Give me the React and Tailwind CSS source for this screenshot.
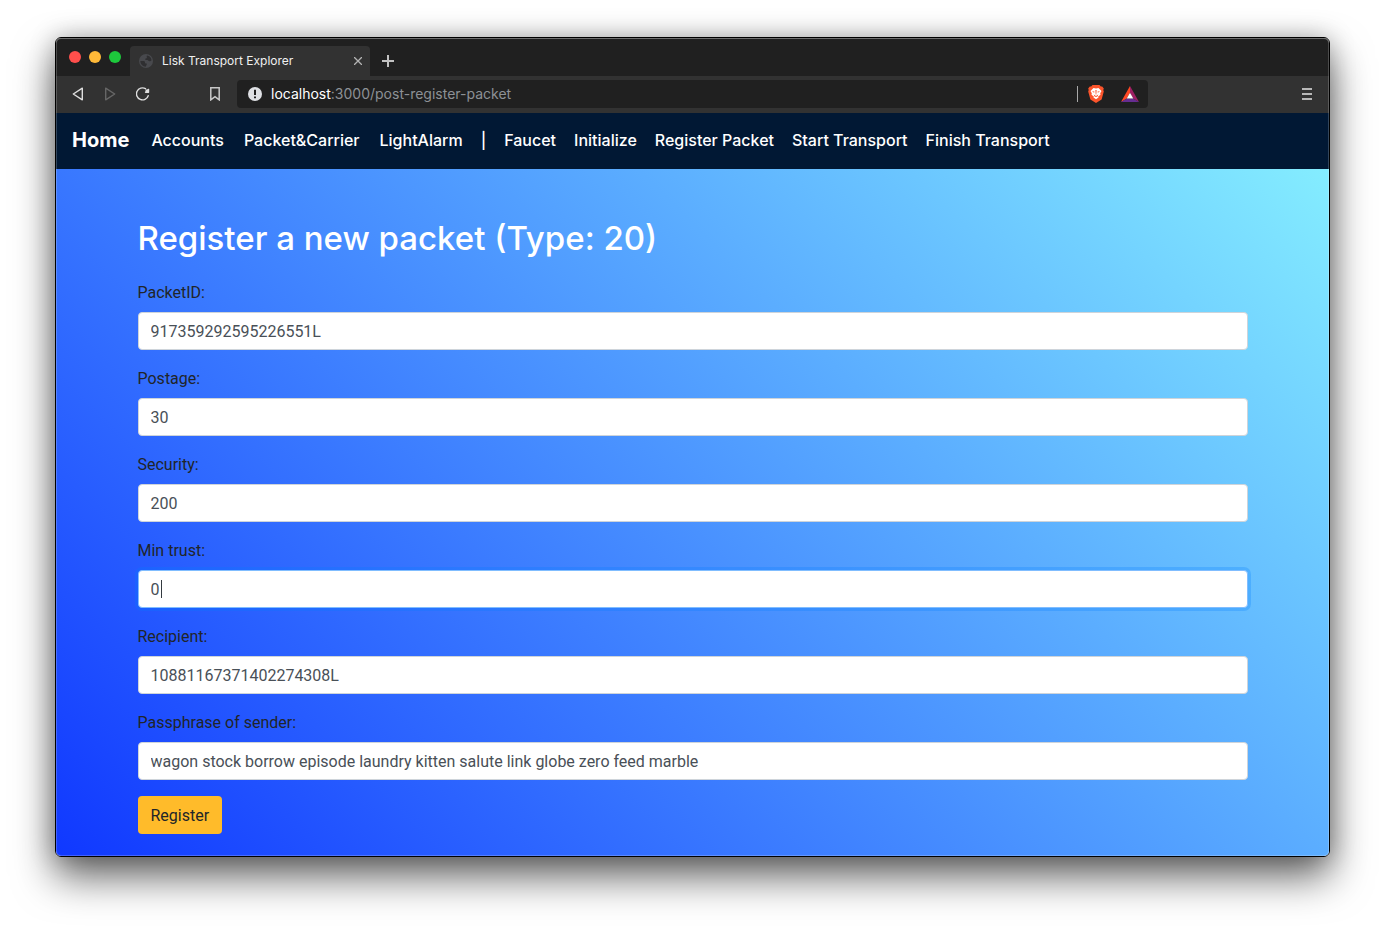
const accountLinks = ['Accounts', 'Packet&Carrier', 'LightAlarm'];
const transactionLinks = ['Faucet', 'Initialize', 'Register Packet', 'Start Transport', 'Finish Transport'];

const fields = [
  { id: 'packet-id', label: 'PacketID:', value: '917359292595226551L' },
  { id: 'postage', label: 'Postage:', value: '30' },
  { id: 'security', label: 'Security:', value: '200' },
  { id: 'min-trust', label: 'Min trust:', value: '0', active: true },
  { id: 'recipient', label: 'Recipient:', value: '10881167371402274308L' },
  {
    id: 'passphrase',
    label: 'Passphrase of sender:',
    value: 'wagon stock borrow episode laundry kitten salute link globe zero feed marble',
  },
];

function TabStrip() {
  return (
    <div className="flex h-[38px] items-end bg-[#202020]">
      <div className="flex h-full items-center gap-2 pl-[13px] pr-[9px]">
        <button type="button" aria-label="Close window" className="size-3 rounded-full bg-[#ff4f4c]" />
        <button type="button" aria-label="Minimize window" className="size-3 rounded-full bg-[#ffb938]" />
        <button type="button" aria-label="Zoom window" className="size-3 rounded-full bg-[#1dc93c]" />
      </div>
      <div className="flex h-[30px] w-[240px] items-center rounded-t bg-[#323232] pl-[9px] pr-[7px]">
        <svg viewBox="0 0 14 14" className="mr-[9px] size-[14px]" aria-hidden="true">
          <circle cx="7" cy="7" r="7" fill="#48494d" />
          <path
            d="M1.300 7h3.200c1 0 1.500.600 1.500 1.400 0 .700.400 1 1.100 1 .800 0 1 .600.600 1.200l-1 2.100A5.700 5.700 0 0 1 1.300 7zM8 1.400a5.700 5.700 0 0 1 4.600 4.900c-.700.800-1.400 1-2.300.900-1-.100-1.100-.900-2-1.100-.900-.200-1.900.100-2-.700-.100-.700.600-.900 1.200-1.100.700-.300.200-.900.200-1.500 0-.600.100-1 .300-1.400z"
            fill="#2f2f31"
          />
        </svg>
        <span className="grow text-xs text-[#f0f0f0]">Lisk Transport Explorer</span>
        <button type="button" aria-label="Close tab" className="p-px">
          <svg viewBox="0 0 8 8" className="size-2" aria-hidden="true">
            <path d="M0 0l8 8M8 0L0 8" stroke="#b4b4b4" strokeWidth="1.300" />
          </svg>
        </button>
      </div>
      <button type="button" aria-label="New tab" className="flex h-[30px] items-center px-3">
        <svg viewBox="0 0 12 12" className="size-3" aria-hidden="true">
          <path d="M6 0v12M0 6h12" stroke="#c2c2c2" strokeWidth="2" />
        </svg>
      </button>
    </div>
  );
}

function Toolbar() {
  return (
    <div className="flex h-[37px] items-center bg-[#323232] pl-4 pr-[17px] pb-px">
      <div className="flex items-center gap-[20px]">
        <button type="button" aria-label="Back">
          <svg viewBox="0 0 12 14" className="h-[14px] w-3" fill="none" aria-hidden="true">
            <path d="M10.300 1.200v11.600L1.300 7z" stroke="#dedede" strokeWidth="1.400" strokeLinejoin="round" />
          </svg>
        </button>
        <button type="button" aria-label="Forward">
          <svg viewBox="0 0 12 14" className="h-[14px] w-3" fill="none" aria-hidden="true">
            <path d="M1.700 1.200v11.600l9-5.800z" stroke="#666" strokeWidth="1.400" strokeLinejoin="round" />
          </svg>
        </button>
        <button type="button" aria-label="Reload">
          <svg viewBox="0 0 14 14" className="size-[14px]" fill="none" aria-hidden="true">
            <path d="M12.200 8.700A6 6 0 1 1 9.500 1.700" stroke="#dedede" strokeWidth="1.400" strokeLinecap="round" />
            <path d="M9.300 2.200c1.300.700 2 .300 3-.400.500-.300.900 0 .900.500v3c0 .400-.200.600-.600.600H9.500c-.600 0-.800-.500-.500-.900.500-.800 1-1.400.300-2.800z" fill="#dedede" />
          </svg>
        </button>
      </div>
      <button type="button" aria-label="Bookmark this page" className="ml-[60px] mr-[17px]">
        <svg viewBox="0 0 10 14" className="h-[14px] w-[10px]" fill="none" aria-hidden="true">
          <path d="M.800.800h8.400v12.100L5 9.700.800 12.900z" stroke="#c8c8c8" strokeWidth="1.500" />
        </svg>
      </button>
      <div className="flex h-7 w-full max-w-[911px] items-center rounded bg-[#202020] pl-[11px] pr-[9px]">
        <svg viewBox="0 0 14 14" className="mr-[9px] size-[14px] shrink-0" aria-hidden="true">
          <circle cx="7" cy="7" r="7" fill="#dfe1e5" />
          <path d="M7 2.800v5.200M7 9.400v1.900" stroke="#202020" strokeWidth="2" />
        </svg>
        <a href="#address" className="grow text-sm text-[#8d9196]">
          <span className="text-white">localhost</span>:3000/post-register-packet
        </a>
        <span className="mr-[10px] h-4 w-px bg-[#a8a8a8]" />
        <button type="button" aria-label="Brave Shields" className="mr-[17px]">
          <svg viewBox="0 0 16 18" className="h-[18px] w-4" aria-hidden="true">
            <path d="M4.500 0h7l1.300 1.500 1.400-.100L15.800 3.600l-.500 1.500.500 1.300-2.200 8-5.600 3.600-5.600-3.600-2.200-8 .500-1.300L.200 3.600 1.800 1.400l1.400.100z" fill="#fb542b" />
            <path d="M5.500 3l2.500.500L10.500 3l3 3-1.300 2.300.300 1.500-2.300 1.800.300.800L8 14.300l-2.500-1.900.300-.800-2.300-1.800.300-1.500L2.500 6z" fill="#fff" />
            <path d="M3.900 6l2.700.800-.600 1zM12.100 6l-2.700.800.600 1zM7.400 5h1.200l-.300 4.600h-.600zM5.700 9.500L8 10.900l2.300-1.400-.600 1.700L8 11.900l-1.700-.700z" fill="#fb542b" />
          </svg>
        </button>
        <button type="button" aria-label="Brave Rewards">
          <svg viewBox="0 0 18 16" className="h-4 w-[18px]" aria-hidden="true">
            <path d="M9 0L0 16l5.800-3.500L9 6.700z" fill="#ff4724" />
            <path d="M9 0l9 16-5.800-3.500L9 6.700z" fill="#9e1f63" />
            <path d="M0 16l5.800-3.500h6.400L18 16z" fill="#662d91" />
            <path d="M9 6.700l3.300 5.900H5.700z" fill="#fff" />
          </svg>
        </button>
      </div>
      <button type="button" aria-label="Menu" className="ml-auto">
        <svg viewBox="0 0 10 12" className="h-3 w-[10px]" aria-hidden="true">
          <path d="M0 1h10M0 6h10M0 11h10" stroke="#b8b8b8" strokeWidth="2" />
        </svg>
      </button>
    </div>
  );
}

function SiteNav() {
  return (
    <nav className="flex h-14 items-center bg-[#011834] px-4 pb-0.5 font-medium text-white">
      <a href="#home" className="mr-[22px] text-xl font-bold">Home</a>
      <div className="flex gap-5">
        {accountLinks.map((name) => (
          <a key={name} href={'#' + name}>{name}</a>
        ))}
      </div>
      <span className="mx-[18px]">|</span>
      <div className="flex gap-[18px]">
        {transactionLinks.map((name) => (
          <a key={name} href={'#' + name}>{name}</a>
        ))}
      </div>
    </nav>
  );
}

function Field({ id, label, value, active }) {
  return (
    <div className="mb-4">
      <label htmlFor={id} className="mb-[7px] block pt-px leading-6 text-[#212529]">{label}</label>
      <div className="relative">
        <input
          id={id}
          type="text"
          defaultValue={value}
          className={
            active
              ? 'block h-[38px] w-full rounded border border-[#80bdff] bg-white px-3 text-[#495057] caret-transparent ring-3 ring-[#007bff]/25 outline-none'
              : 'block h-[38px] w-full rounded border border-[#ced4da] bg-white px-3 text-[#495057] outline-none'
          }
        />
        {active && <span className="absolute top-[10px] left-[23px] h-[18px] w-px bg-[#343a40]" />}
      </div>
    </div>
  );
}

export default function App() {
  return (
    <div className="min-h-screen bg-white px-[55px] pt-[37px] pb-[73px] font-['Inter','Liberation_Sans',sans-serif]">
      <div className="rounded-md shadow-[0_20px_40px_rgba(0,0,0,0.6),0_0_24px_rgba(0,0,0,0.25)]">
        <div className="relative overflow-hidden rounded-md border border-black">
          <TabStrip />
          <Toolbar />
          <SiteNav />
          <main className="bg-[linear-gradient(45deg,#1038ff,#84edff)] pt-[50px] pb-[22px]">
            <form className="mx-auto max-w-[1140px] px-[15px] font-['Roboto','Liberation_Sans',sans-serif]">
              <h1 className="mb-[22px] font-['Inter','Liberation_Sans',sans-serif] text-[33px] leading-[39px] font-medium text-white">
                Register a new packet (Type: 20)
              </h1>
              {fields.map((field) => (
                <Field key={field.id} {...field} />
              ))}
              <button type="button" className="h-[38px] rounded bg-[#ffbb2a] px-[13px] pt-px text-[#212529]">Register</button>
            </form>
          </main>
          <div className="pointer-events-none absolute inset-0 rounded-[5px] shadow-[inset_0_0_0_1px_rgba(255,255,255,0.2),inset_0_1px_0_rgba(255,255,255,0.2)]" />
        </div>
      </div>
    </div>
  );
}
